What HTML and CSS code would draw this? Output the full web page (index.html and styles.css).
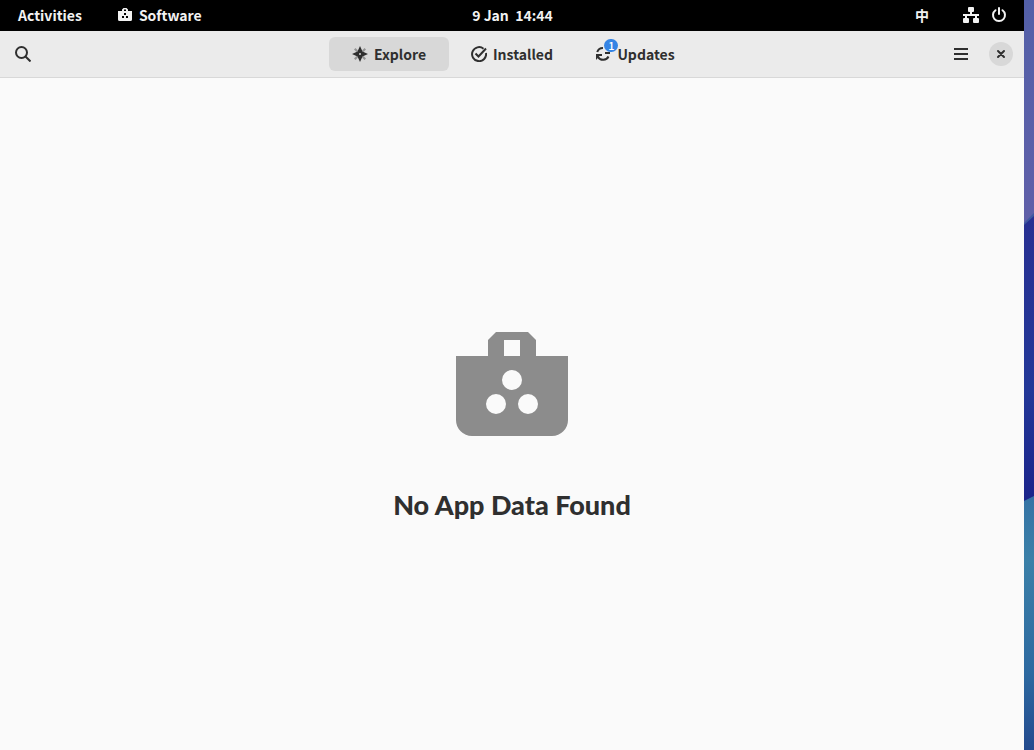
FILE: index.html
```html
<!DOCTYPE html>
<html lang="en">
<head>
  <meta charset="UTF-8" />
  <meta name="viewport" content="width=device-width, initial-scale=1.0"/>
  <title>Software</title>
  <link rel="stylesheet" href="styles.css">
</head>
<body>

<div class="screen">
  <!-- top panel -->
  <div class="panel">
    <div class="panel-left">
      <button class="panel-btn">Activities</button>
      <button class="panel-btn">
        <svg width="14" height="14" viewBox="0 0 14 14" fill="currentColor">
          <path fill-rule="evenodd" d="M4 3V1.500L5.500 0h3L10 1.500V3h4v8.500a1.500 1.500 0 0 1-1.500 1.500h-11A1.500 1.500 0 0 1 0 11.500V3zM6 1.500V3h2V1.500zM6 5v2h2V5zM4 8v2h2V8zM8 8v2h2V8z"/>
        </svg>
        Software
      </button>
    </div>
    <button class="panel-btn clock">9 Jan  14:44</button>
    <div class="panel-right">
      <button class="panel-btn" lang="zh">中</button>
      <button class="panel-btn status" aria-label="System">
        <svg width="16" height="16" viewBox="0 0 16 16" fill="currentColor">
          <rect x="5" y="0" width="6" height="5" rx="1"/>
          <rect x="0" y="11" width="6" height="5" rx="1"/>
          <rect x="10" y="11" width="6" height="5" rx="1"/>
          <path d="M7 5h2v2h7v2h-2v2h-2V9H4v2H2V9H0V7h7z"/>
        </svg>
        <svg width="16" height="16" viewBox="0 0 16 16" fill="none" stroke="currentColor" stroke-width="2" stroke-linecap="round">
          <path d="M4.500 3.200a6 6 0 1 0 7 0M8 1v6"/>
        </svg>
      </button>
    </div>
  </div>

  <!-- header bar -->
  <div class="header">
    <button class="icon-btn" aria-label="Search">
      <svg width="16" height="16" viewBox="0 0 16 16" fill="none" stroke="currentColor" stroke-width="2">
        <circle cx="6.500" cy="6.500" r="5.500"/>
        <path d="M10.500 10.500l5 5"/>
      </svg>
    </button>

    <div class="tabs">
      <button class="tab active">
        <svg width="16" height="16" viewBox="0 0 16 16" fill="currentColor">
          <path opacity="0.4" d="M2 3.500L3.500 2L6 4.500 4.500 6zM14 3.500L12.500 2L10 4.500 11.500 6zM2 12.500L3.500 14L6 11.500 4.500 10zM14 12.500L12.500 14L10 11.500 11.500 10z"/>
          <path fill-rule="evenodd" d="M8 0l2.500 5.500L16 8l-5.500 2.500L8 16l-2.500-5.500L0 8l5.500-2.500zM8 7a1 1 0 1 0 0 2 1 1 0 0 0 0-2z"/>
        </svg>
        Explore
      </button>
      <button class="tab">
        <svg width="16" height="16" viewBox="0 0 16 16" fill="none" stroke="currentColor" stroke-width="2">
          <path d="M12.500 2.700A7 7 0 1 0 15 7"/>
          <path d="M4.500 7.500L7.500 10.500L15 2.500"/>
        </svg>
        Installed
      </button>
      <button class="tab">
        <span class="tab-icon">
          <svg width="16" height="16" viewBox="0 0 16 16" fill="none" stroke="currentColor" stroke-width="2">
            <path d="M2.200 6A6 6 0 0 1 8 2M3 11A6 6 0 0 0 13.500 10.500"/>
            <path fill="currentColor" stroke="none" d="M1 8h6v2H4.500L1 14zM10 6h5v2h-5z"/>
          </svg>
          <span class="badge">1</span>
        </span>
        Updates
      </button>
    </div>

    <div class="header-end">
      <button class="icon-btn" aria-label="Menu">
        <svg width="16" height="16" viewBox="0 0 16 16" fill="currentColor">
          <path d="M1 2h14v2H1zM1 7h14v2H1zM1 12h14v2H1z"/>
        </svg>
      </button>
      <button class="close-btn" aria-label="Close">
        <svg width="16" height="16" viewBox="0 0 16 16" fill="none" stroke="currentColor" stroke-width="2" stroke-linecap="round">
          <path d="M5 5l6 6M11 5l-6 6"/>
        </svg>
      </button>
    </div>
  </div>

  <!-- empty state -->
  <div class="content">
    <svg class="bag" width="128" height="128" viewBox="0 0 128 128" fill="currentColor">
      <path fill-rule="evenodd" d="M40 36V20l8-8h32l8 8v16h32v64a16 16 0 0 1-16 16H24a16 16 0 0 1-16-16V36zM56 20v16h16V20zM64 50a10 10 0 1 0 0 20 10 10 0 0 0 0-20zM48 74a10 10 0 1 0 0 20 10 10 0 0 0 0-20zM80 74a10 10 0 1 0 0 20 10 10 0 0 0 0-20z"/>
    </svg>
    <h1>No App Data Found</h1>
  </div>
</div>

<!-- strip of wallpaper beside the window -->
<svg class="wallpaper" viewBox="0 0 10 750" preserveAspectRatio="none">
  <defs>
    <linearGradient id="top" x1="0" y1="0" x2="0" y2="1">
      <stop offset="0" stop-color="#5360a8"/>
      <stop offset="1" stop-color="#605fa8"/>
    </linearGradient>
    <linearGradient id="middle" x1="0" y1="0" x2="0" y2="1">
      <stop offset="0" stop-color="#283092"/>
      <stop offset="0.6" stop-color="#233898"/>
      <stop offset="1" stop-color="#1a238a"/>
    </linearGradient>
    <linearGradient id="bottom" x1="0" y1="0" x2="0" y2="1">
      <stop offset="0" stop-color="#3573a5"/>
      <stop offset="0.25" stop-color="#3b80a8"/>
      <stop offset="0.7" stop-color="#2d69a0"/>
      <stop offset="1" stop-color="#234a8e"/>
    </linearGradient>
  </defs>
  <rect width="10" height="230" fill="url(#top)"/>
  <path d="M0 223L10 213V220L0 227z" fill="#3f59a0"/>
  <path d="M0 225L10 216V505H0z" fill="url(#middle)"/>
  <path d="M0 501L10 496V750H0z" fill="url(#bottom)"/>
</svg>

</body>
</html>
```

FILE: styles.css
```css
* {
  box-sizing: border-box;
}
body {
  margin: 0;
  min-height: 100vh;
  display: flex;
  font-family: "Noto Sans CJK SC", "Noto Sans", sans-serif;
  font-size: 14px;
  font-weight: 700;
  color: #2f2f2f;
  background: #fafafa;
}
button {
  font: inherit;
  color: inherit;
  background: none;
  border: none;
  padding: 0;
  cursor: pointer;
}
svg {
  display: block;
  flex: none;
}
.screen {
  flex: 1;
  display: flex;
  flex-direction: column;
}
.wallpaper {
  width: 10px;
  height: 100vh;
}

/* top panel */
.panel {
  display: grid;
  grid-template-columns: 1fr auto 1fr;
  align-items: center;
  height: 31px;
  padding: 0 17px 2px 18px;
  background: #000;
  color: #f2f2f2;
}
.panel-left, .panel-right {
  display: flex;
  align-items: center;
  gap: 36px;
}
.panel-right {
  justify-content: flex-end;
  gap: 34px;
}
.panel-btn {
  display: flex;
  align-items: center;
  gap: 7px;
  line-height: 20px;
}
.clock {
  white-space: pre;
}
.status {
  gap: 12px;
}

/* header bar */
.header {
  display: grid;
  grid-template-columns: 1fr auto 1fr;
  align-items: center;
  height: 47px;
  padding: 0 6px;
  background: #ebebeb;
  border-bottom: 1px solid #d8d8d8;
}
.icon-btn {
  width: 34px;
  height: 34px;
  display: flex;
  align-items: center;
  justify-content: center;
  border-radius: 6px;
}
.tabs {
  display: flex;
  gap: 3px;
}
.tab {
  width: 120px;
  height: 34px;
  display: flex;
  align-items: center;
  justify-content: center;
  gap: 6px;
  border-radius: 6px;
}
.tab.active {
  background: #d8d8d8;
}
.tab-icon {
  position: relative;
}
.badge {
  position: absolute;
  top: -7px;
  right: -7px;
  width: 14px;
  height: 13px;
  border-radius: 7px;
  background: #3584e4;
  color: #fff;
  font-size: 11px;
  line-height: 13px;
  font-weight: 500;
  text-align: center;
}
.header-end {
  display: flex;
  align-items: center;
  justify-content: flex-end;
  gap: 11px;
  padding-right: 5px;
}
.close-btn {
  width: 24px;
  height: 24px;
  display: flex;
  align-items: center;
  justify-content: center;
  border-radius: 50%;
  background: #d8d8d8;
}

/* empty state */
.content {
  flex: 1;
  display: flex;
  flex-direction: column;
  align-items: center;
  justify-content: center;
  gap: 36px;
  padding-top: 18px;
}
.bag {
  color: #8c8c8c;
}
h1 {
  margin: 0;
  font-family: "Lato Black", Lato, sans-serif;
  font-size: 27px;
  line-height: 42px;
  font-weight: 900;
}
```
